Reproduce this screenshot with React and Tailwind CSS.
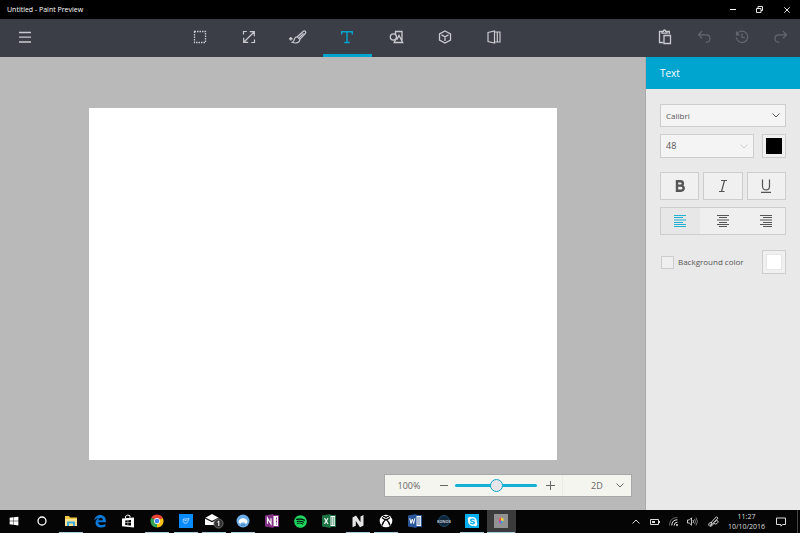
import React, { useState } from 'react';
import { FaSkype, FaSpotify, FaWindows } from 'react-icons/fa';

const line = { fill: 'none', stroke: 'currentColor', strokeWidth: 1 };

function SelectIcon() {
  return (
    <svg viewBox="0 0 14 14" className="w-3.5 h-3.5" {...line}>
      <rect x="1.5" y="1.5" width="11" height="11" strokeDasharray="1.5 1" strokeWidth="1.3" />
    </svg>
  );
}

function CropIcon() {
  return (
    <svg viewBox="0 0 14 14" className="w-3.5 h-3.5" {...line} strokeWidth="1.2">
      <path d="M1.500 4.500v-3H4.800M9.200 12.500h3.300V9.500M2 12 12 2M7.800 1.700h4.500v4.500M1.700 7.800v4.500h4.500" />
    </svg>
  );
}

function BrushIcon() {
  return (
    <svg viewBox="0 0 18 14" className="w-[18px] h-3.5" {...line} strokeWidth="1.2">
      <path d="M8.300 6.800 14.300 1.300q1.300-.8 2.100.1t-.1 2.100L10.800 9.400M10 7.800l4.500-4.500" />
      <path d="M8.300 6.800Q6.300 6.700 5.600 8.600C5.200 10.500 5 11.300 3.200 12.300c2.700 1 5.300.8 6.700-.5 1-1 .9-1.700.9-2.400Z" />
      <path d="M1.800 7v3.600M0 8.800h3.600" strokeWidth="1.4" />
    </svg>
  );
}

function TextIcon() {
  return (
    <svg viewBox="0 0 14 14" className="w-3.5 h-3.5" {...line} strokeWidth="1.4">
      <path d="M1.700 4.400V1.700h10.600v2.700M7 1.700v10.800M4.300 12.500h5.400" />
    </svg>
  );
}

function ShapesIcon() {
  return (
    <svg viewBox="0 0 15 14" className="w-[15px] h-3.5" {...line} strokeWidth="1.3">
      <path d="M6.500 4V1.500H13v9M6.800 9 5.200 12.500h8.500L10 5.500 7.800 9.600" />
      <circle cx="4.400" cy="7" r="3.100" />
    </svg>
  );
}

function CubeIcon() {
  return (
    <svg viewBox="0 0 14 14" className="w-3.5 h-3.5" {...line} strokeWidth="1.3">
      <path d="M7 1l5.500 2.800v6.400L7 13l-5.500-2.800V3.800ZM3.500 4.900 7 6.800l3.500-1.900M7 6.800V11" />
    </svg>
  );
}

function PanelsIcon() {
  return (
    <svg viewBox="0 0 14 14" className="w-3.5 h-3.5" {...line} strokeWidth="1.2">
      <path d="M1 2.500 7.500 1v12L1 11.500ZM7.500 2h2.800v10H7.500M10.300 2H13v10h-2.700" />
    </svg>
  );
}

function PasteIcon() {
  return (
    <svg viewBox="0 0 14 16" className="w-3.5 h-4" {...line} strokeWidth="1.3">
      <path d="M5.500 13.500h-4v-11H4M8.800 2.500h2.500V5M4 4.200V2.400h1.400C5.500.5 7.500.5 7.600 2.400H9v1.800Z" />
      <path d="M6 6.500h6.500v8H6Z" />
    </svg>
  );
}

function UndoIcon({ flip }) {
  return (
    <svg viewBox="0 0 14 14" className={flip ? 'w-3.5 h-3.5 -scale-x-100' : 'w-3.5 h-3.5'} {...line} strokeWidth="1.200">
      <path d="M5 1.200 1.500 4.800 5 8.400M1.500 4.800H9c2.500 0 4 1.600 4 3.700s-1.600 3.800-4.200 3.800" />
    </svg>
  );
}

function HistoryIcon() {
  return (
    <svg viewBox="0 0 14 14" className="w-3.5 h-3.5" {...line} strokeWidth="1.200">
      <path d="M1.500 1.500v3.300h3.300M1.700 4.600A5.700 5.700 0 1 1 1.300 7.500M7 3.500v4h3" />
    </svg>
  );
}

function Chevron({ className }) {
  return (
    <svg viewBox="0 0 8 5" className={`w-2 h-[5px] pointer-events-none ${className}`} {...line}>
      <path d="M.5.5 4 4 7.500.5" />
    </svg>
  );
}

const tools = [
  { name: 'Select', Icon: SelectIcon },
  { name: 'Crop', Icon: CropIcon },
  { name: 'Brushes', Icon: BrushIcon },
  { name: 'Text', Icon: TextIcon },
  { name: 'Stickers', Icon: ShapesIcon },
  { name: '3D objects', Icon: CubeIcon },
  { name: 'Canvas', Icon: PanelsIcon },
];

function TitleBar() {
  return (
    <header className="flex items-center justify-between h-[19px] shrink-0 bg-black text-white pl-[7px]">
      <h1 className="text-[7px] leading-none">Untitled - Paint Preview</h1>
      <div className="flex">
        <button aria-label="Minimize" className="w-[27px] h-[19px] flex items-center justify-center">
          <svg viewBox="0 0 6 6" className="w-1.5 h-1.5" {...line}><path d="M0 2.500h6" /></svg>
        </button>
        <button aria-label="Restore" className="w-[27px] h-[19px] flex items-center justify-center">
          <svg viewBox="0 0 7 7" className="w-[7px] h-[7px]" {...line} strokeWidth=".9">
            <path d="M.5 2.500H5v4H.5ZM2 2.500v-2h4.500v4H5" />
          </svg>
        </button>
        <button aria-label="Close" className="w-[27px] h-[19px] flex items-center justify-center">
          <svg viewBox="0 0 6 6" className="w-1.5 h-1.5" {...line} strokeWidth=".9"><path d="m.3.300 5.400 5.400M5.700.3.300 5.700" /></svg>
        </button>
      </div>
    </header>
  );
}

function Toolbar({ tool, setTool }) {
  return (
    <div className="flex h-[38px] shrink-0 bg-[#3b3e47] text-[#c9cad0]">
      <button aria-label="Menu" className="w-[49px] pb-[3px] flex items-center justify-center">
        <svg viewBox="0 0 12 12" className="w-3 h-3" {...line} strokeWidth="1.3"><path d="M0 1.500h12M0 6.200h12M0 11h12" /></svg>
      </button>
      <nav className="flex ml-[127px] flex-1">
        {tools.map(({ name, Icon }) => (
          <button
            key={name}
            aria-label={name}
            onClick={() => setTool(name)}
            className={
              tool === name
                ? 'w-[49px] pr-px flex items-center justify-center border-b-3 border-[#00a5cf] text-[#00a5cf]'
                : 'w-[49px] pr-px flex items-center justify-center border-b-3 border-transparent'
            }
          >
            <Icon />
          </button>
        ))}
      </nav>
      <div className="grid grid-cols-4 w-[154px] pb-[3px]">
        <button aria-label="Paste" className="flex items-center justify-center"><PasteIcon /></button>
        <button aria-label="Undo" className="flex items-center justify-center text-[#656871]"><UndoIcon /></button>
        <button aria-label="History" className="flex items-center justify-center text-[#656871]"><HistoryIcon /></button>
        <button aria-label="Redo" className="flex items-center justify-center text-[#656871]"><UndoIcon flip /></button>
      </div>
    </div>
  );
}

function ZoomBar() {
  const [zoom, setZoom] = useState(50);
  return (
    <div className="flex items-center self-end h-[21px] w-[246px] mt-[15px] mr-3.5 bg-[#f4f5ee] text-[#666] outline outline-[#a8a8a8] text-[9px]">
      <span className="w-[48px] text-center">100%</span>
      <button aria-label="Zoom out" className="w-[21px] h-full flex items-center justify-center">
        <svg viewBox="0 0 8 8" className="w-2 h-2" {...line}><path d="M0 3.500h8" /></svg>
      </button>
      <input
        type="range"
        aria-label="Zoom"
        value={zoom}
        onChange={(e) => setZoom(e.target.value)}
        className="w-[82px] mx-px h-3.5 appearance-none bg-transparent [&::-webkit-slider-runnable-track]:h-[3px] [&::-webkit-slider-runnable-track]:rounded-full [&::-webkit-slider-runnable-track]:bg-[#16b0d5] [&::-webkit-slider-thumb]:appearance-none [&::-webkit-slider-thumb]:w-[13px] [&::-webkit-slider-thumb]:h-[13px] [&::-webkit-slider-thumb]:-mt-[5px] [&::-webkit-slider-thumb]:rounded-full [&::-webkit-slider-thumb]:bg-[#e6e6ea] [&::-webkit-slider-thumb]:border [&::-webkit-slider-thumb]:border-[#0fa5cb]"
      />
      <button aria-label="Zoom in" className="w-[24px] h-full flex items-center justify-center">
        <svg viewBox="0 0 9 9" className="w-[9px] h-[9px]" {...line}><path d="M0 4.500h9M4.500 0v9" /></svg>
      </button>
      <div className="relative flex-1 h-full flex items-center border-l border-[#ecece6]">
        <select aria-label="View" className="appearance-none w-full h-full pl-[28px]">
          <option>2D</option>
          <option>3D</option>
        </select>
        <Chevron className="absolute right-[7px]" />
      </div>
    </div>
  );
}

function AlignIcon({ d }) {
  return <svg viewBox="0 0 12 12" className="w-3 h-3" {...line}><path d={d} /></svg>;
}

const aligns = [
  { name: 'Align left', d: 'M0 .5h12M0 2.500h9M0 5h12M0 7.500h9M0 9.500h12M0 11.500h12' },
  { name: 'Align center', d: 'M0 .5h12M2 2.500h8M0 5h12M2 7.500h8M0 9.500h12M2 11.500h8' },
  { name: 'Align right', d: 'M0 .5h12M3 2.500h9M0 5h12M3 7.500h9M0 9.500h12M3 11.500h9' },
];

function TextPanel() {
  const [align, setAlign] = useState('Align left');
  return (
    <aside className="w-[154px] shrink-0 bg-[#e9e9e9] text-[#555]">
      <h2 className="h-8 px-3.5 flex items-center bg-[#00a5cf] text-white text-[10px]">Text</h2>
      <div className="px-3.5 pt-[15px] text-[8px]">
        <div className="relative flex items-center">
          <select aria-label="Font" className="appearance-none w-full h-[23px] pl-[5px] bg-[#f4f4f4] border border-[#cdcdcd]">
            <option>Calibri</option>
            <option>Arial</option>
          </select>
          <Chevron className="absolute right-1.5" />
        </div>
        <div className="flex gap-2 mt-[7px]">
          <div className="relative flex items-center flex-1">
            <select aria-label="Font size" className="appearance-none w-full h-6 pl-[5px] bg-[#f4f4f4] border border-[#cdcdcd] text-[9px]">
              <option>48</option>
              <option>72</option>
            </select>
            <Chevron className="absolute right-1.5 text-[#ccc]" />
          </div>
          <button aria-label="Text color" className="w-6 h-6 p-[3px] bg-[#f0f0f0] border border-[#cdcdcd]">
            <span className="block w-full h-full bg-black" />
          </button>
        </div>
        <div className="grid grid-cols-3 gap-1 mt-3.5">
          <button aria-label="Bold" className="h-7 flex items-center justify-center bg-[#f0f0f0] border border-[#cdcdcd]">
            <svg viewBox="0 0 12 14" className="w-3 h-3.5" {...line} strokeWidth="2.400">
              <path d="M3 2.200h3.200c3.600 0 3.600 4.400 0 4.400H3M6.200 6.600c4.700 0 4.700 5.200 0 5.200H3V1" />
            </svg>
          </button>
          <button aria-label="Italic" className="h-7 flex items-center justify-center bg-[#f0f0f0] border border-[#cdcdcd]">
            <svg viewBox="0 0 12 14" className="w-3 h-3.5" {...line} strokeWidth="1.2"><path d="M4 1.500h6M2 12.500h5.500M7.500 1.500 4.500 12.500" /></svg>
          </button>
          <button aria-label="Underline" className="h-7 flex items-center justify-center bg-[#f0f0f0] border border-[#cdcdcd]">
            <svg viewBox="0 0 12 14" className="w-3 h-3.5" {...line} strokeWidth="1.2"><path d="M2.500.5v6.700c0 5 7 5 7 0V.5M1 13.400h10" /></svg>
          </button>
        </div>
        <div className="grid grid-cols-3 gap-1 mt-[7px] h-7 border border-[#cdcdcd] bg-[#efefef]">
          {aligns.map(({ name, d }) => (
            <button
              key={name}
              aria-label={name}
              onClick={() => setAlign(name)}
              className={align === name ? 'flex items-center justify-center bg-[#e7e7e7] text-[#1fb0d4]' : 'flex items-center justify-center'}
            >
              <AlignIcon d={d} />
            </button>
          ))}
        </div>
        <div className="flex items-center justify-between mt-[15px]">
          <label className="flex items-center gap-1 pl-px">
            <input type="checkbox" className="appearance-none w-[13px] h-[13px] bg-[#efefef] border border-[#cdcdcd] checked:bg-[#00a5cf]" />
            Background color
          </label>
          <button aria-label="Background color swatch" className="w-6 h-6 p-[3px] bg-[#f0f0f0] border border-[#cdcdcd]">
            <span className="block w-full h-full bg-white border border-[#e6e6e6]" />
          </button>
        </div>
      </div>
    </aside>
  );
}

function Tile({ children }) {
  return <svg viewBox="0 0 14 14" className="w-3.5 h-3.5">{children}</svg>;
}

const apps = [
  { name: 'Start', icon: <FaWindows className="w-2.5 h-2.5" /> },
  { name: 'Cortana', icon: <Tile><circle cx="7" cy="7" r="4" fill="none" stroke="#fff" strokeWidth="1.300" /></Tile> },
  {
    name: 'File Explorer',
    open: true,
    icon: (
      <Tile>
        <path d="M1 2h4l1 1.500h7V12H1Z" fill="#f5c746" />
        <path d="M1 5h12v7H1Z" fill="#fde38e" />
        <path d="M3 7.500h8V12H9V9.500H5V12H3Z" fill="#3fa9e0" />
      </Tile>
    ),
  },
  {
    name: 'Edge',
    icon: (
      <Tile>
        <path
          d="M1.200 6.300C1.700 3 4.200 1 7.200 1c3.600 0 5.700 2.600 5.700 5.800v1.400H5.200c.1 2 1.700 2.800 3.700 2.800 1.300 0 2.500-.4 3.500-1v2.500c-1.200.7-2.600 1-4.200 1C4.700 13.500 2.500 11.400 2.500 8.700c0-2.200 1.200-3.900 3.100-4.800C3.600 4 2 5 1.200 6.300ZM5.300 6.300h4.600c0-1.500-.8-2.300-2.200-2.300-1.300 0-2.200.9-2.400 2.300Z"
          fill="#0a78d7"
          fillRule="evenodd"
        />
      </Tile>
    ),
  },
  {
    name: 'Store',
    icon: (
      <Tile>
        <path d="M1 4.500 13 3.500V13.500L1 12.300Z" fill="#fff" />
        <path d="M4.500 4.200V2.300Q6.800 0 9 1.800v2" fill="none" stroke="#fff" />
        <path d="M4.200 6.500l2.500-.2v2.200H4.200ZM7.200 6.200 10 6v2.500H7.200ZM4.200 9h2.500v2.300l-2.500-.2ZM7.200 9H10v2.600l-2.800-.2Z" fill="#000" />
      </Tile>
    ),
  },
  {
    name: 'Chrome',
    open: true,
    icon: (
      <Tile>
        <path d="M7 7 1.400 3.700A6.500 6.500 0 0 1 12.600 3.700Z" fill="#e54335" />
        <path d="M7 7 12.600 3.700A6.500 6.500 0 0 1 7 13.500Z" fill="#fbc116" />
        <path d="M7 7v6.500A6.500 6.500 0 0 1 1.400 3.700Z" fill="#34a353" />
        <path d="M7 4h5.800L7 7Z" fill="#e54335" />
        <circle cx="7" cy="7" r="3" fill="#fff" />
        <circle cx="7" cy="7" r="2.300" fill="#4285f4" />
      </Tile>
    ),
  },
  {
    name: 'Bird',
    open: true,
    icon: (
      <Tile>
        <path d="M0 0h14v14H0Z" fill="#0a8cff" />
        <path d="M4.500 5h3.800l1.700-.7-.8 1.500C9 8.500 7.500 9.500 6 9.200 4.300 8.900 3.800 7 4.500 5ZM5.500 6.500h2" fill="none" stroke="#b5dbff" strokeWidth=".9" />
      </Tile>
    ),
  },
  {
    name: 'Mail',
    open: true,
    icon: (
      <svg viewBox="0 0 20 16" className="w-5 h-4">
        <path d="M1 5 8 1l7 4v7H1Z" fill="#fff" />
        <path d="m1 5 7 3.500L15 5" fill="none" stroke="#111" strokeWidth="1.200" />
        <circle cx="14.500" cy="10.500" r="4.600" fill="#333" stroke="#777" strokeWidth=".8" />
        <path d="M13.300 9.200 14.800 8v5" fill="none" stroke="#fff" />
      </svg>
    ),
  },
  {
    name: 'Tweeten',
    open: true,
    icon: (
      <Tile>
        <circle cx="7" cy="7" r="6.500" fill="#6eaee6" />
        <path d="M2.500 8C3 3 11 3 11.500 8L10 10 8.500 8.500h-3L4 10Z" fill="#fff" />
        <path d="M5 11.500q2-1.500 4 0" fill="none" stroke="#3578b5" />
      </Tile>
    ),
  },
  {
    name: 'OneNote',
    icon: (
      <Tile>
        <path d="M7 1.500h6.500v11H7Z" fill="#fff" stroke="#813083" />
        <path d="M11.500 3.500v7" stroke="#813083" strokeDasharray="2 1" />
        <path d="M0 1.500 8.500 0v14L0 12.500Z" fill="#813083" />
        <path d="M2.500 9.800V4.200l3.500 5.600V4.200" fill="none" stroke="#fff" strokeWidth="1.200" />
      </Tile>
    ),
  },
  { name: 'Spotify', icon: <FaSpotify className="w-[13px] h-[13px] text-[#1ed45e]" /> },
  {
    name: 'Excel',
    icon: (
      <Tile>
        <path d="M7 1.500h6.500v11H7Z" fill="#fff" stroke="#1f7446" />
        <path d="M9 4h3.500M9 6h3.500M9 8h3.500M9 10h3.500" stroke="#1f7446" strokeDasharray="1.500 .5" />
        <path d="M0 1.500 8.500 0v14L0 12.500Z" fill="#1f7446" />
        <path d="m2.500 4.200 3.500 5.600M6 4.200 2.500 9.800" stroke="#fff" strokeWidth="1.200" />
      </Tile>
    ),
  },
  {
    name: 'Nextgen Reader',
    open: true,
    icon: <Tile><path d="M1.500 3.500 5 1.500l4.500 6.700V2.500L12.500 1v10.500L9 13.300 4.800 7v4.800L1.500 13.300Z" fill="#e4e4e4" /></Tile>,
  },
  {
    name: 'Xbox',
    open: true,
    icon: (
      <Tile>
        <circle cx="7" cy="7" r="6.300" fill="#fff" />
        <path d="M4 2.200Q5.500 2.300 7 3.500 8.500 2.300 10 2.200M3 11.500Q4 7.500 7 5.200 10 7.500 11 11.500M3 3.500 6 5.700M11 3.500 8 5.700" fill="none" stroke="#000" strokeWidth="1.300" />
      </Tile>
    ),
  },
  {
    name: 'Word',
    icon: (
      <Tile>
        <path d="M7 1.500h6.500v11H7Z" fill="#fff" stroke="#2b569a" />
        <path d="M9 4h3.500M9 6h3.500M9 8h3.500M9 10h3.500" stroke="#2b569a" strokeWidth=".8" />
        <path d="M0 1.500 8.500 0v14L0 12.500Z" fill="#2b569a" />
        <path d="m1.800 4.300 1.200 5.200 1.300-4.500 1.300 4.500 1.200-5.200" fill="none" stroke="#fff" />
      </Tile>
    ),
  },
  {
    name: 'Sonos',
    icon: (
      <Tile>
        <circle cx="7" cy="7" r="5.500" fill="#102538" stroke="#1d4869" />
        <text x="7" y="8.500" fontSize="4" fontWeight="bold" textAnchor="middle" fill="#c5ced6">SONOS</text>
      </Tile>
    ),
  },
  {
    name: 'Skype',
    open: true,
    icon: <span className="w-3.5 h-3.5 flex items-center justify-center bg-[#00aff0]"><FaSkype className="w-[11px] h-[11px]" /></span>,
  },
  {
    name: 'Paint Preview',
    open: true,
    active: true,
    icon: (
      <Tile>
        <path d="M0 0h14v14H0Z" fill="#929292" />
        <path d="M5 4.200 7 3.500v3L5 7Z" fill="#ef4f46" />
        <path d="m7 3.500 2.500 1v3L7 6.500Z" fill="#f7d33c" />
        <path d="m5 7 2-.5V10L5 8.800Z" fill="#a551c4" />
        <path d="m7 6.500 2.500 1L7 10Z" fill="#38a9c8" />
      </Tile>
    ),
  },
];

function Taskbar() {
  return (
    <footer className="flex justify-between h-[23px] shrink-0 bg-[#050505] text-white">
      <div className="grid grid-cols-18 w-[516px]">
        {apps.map(({ name, icon, open, active }) => (
          <button
            key={name}
            aria-label={name}
            className={`flex flex-col items-center pr-px ${active ? 'bg-[#3b3b3b]' : ''}`}
          >
            <span className="flex flex-1 items-center justify-center">{icon}</span>
            <span className={`h-px ${active ? 'w-full' : 'w-6'} ${open ? 'bg-[#a9cfe2]' : 'bg-transparent'}`} />
          </button>
        ))}
      </div>
      <div className="flex items-center text-[#ddd]">
        <button aria-label="Show hidden icons" className="w-[19px] flex justify-center"><Chevron className="rotate-180" /></button>
        <button aria-label="Battery" className="w-[19px] flex justify-center">
          <svg viewBox="0 0 10 8" className="w-2.5 h-2" {...line}><path d="M.5 1.500h8v5h-8ZM9.500 3v2" /><path d="M2 3h3v2H2Z" fill="currentColor" stroke="none" /></svg>
        </button>
        <button aria-label="Network" className="w-[19px] flex justify-center">
          <svg viewBox="0 0 9 9" className="w-[9px] h-[9px]" {...line}>
            <path d="M.5 8.500Q.5.500 8.500.5" stroke="#666" />
            <path d="M2.800 8.500q0-5.700 5.700-5.700M5.200 8.500q0-3.300 3.300-3.300" />
            <circle cx="8" cy="8" r="1" fill="currentColor" stroke="none" />
          </svg>
        </button>
        <button aria-label="Volume" className="w-[19px] flex justify-center">
          <svg viewBox="0 0 11 9" className="w-[11px] h-[9px]" {...line} strokeWidth=".9">
            <path d="M.5 3h1.800L4.500.8v7.400L2.300 6H.5ZM6 3q1 1.500 0 3" />
            <path d="M7.500 1.800q2 2.700 0 5.400M9 .5q2.800 4 0 8" stroke="#888" />
          </svg>
        </button>
        <button aria-label="Windows Ink" className="w-[22px] flex justify-center">
          <svg viewBox="0 0 11 11" className="w-[11px] h-[11px]" {...line}>
            <path d="M2.500 9.500 4 5.500 8.500.8l1.500 1.400L5.500 7ZM3.500 6.500C1 6 0 9 1.500 10S5 9 5.500 7.500M6 6.500C8 3.500 11 4.500 9.800 6.500S6.500 8.500 6 7" />
          </svg>
        </button>
        <time className="w-[45px] text-center text-[7px] leading-[10px]">
          11:27<br />10/10/2016
        </time>
        <button aria-label="Notifications" className="w-[23px] flex justify-center">
          <svg viewBox="0 0 10 10" className="w-2.5 h-2.5" {...line}><path d="M.5 1h9v6.500H6.500L5 9.200V7.500H.5Z" /></svg>
        </button>
        <span className="ml-[5px] w-[3px] h-full border-l border-[#444]" />
      </div>
    </footer>
  );
}

function App() {
  const [tool, setTool] = useState('Text');
  return (
    <div className="flex flex-col h-screen font-['Open_Sans','Noto_Sans',sans-serif]">
      <TitleBar />
      <Toolbar tool={tool} setTool={setTool} />
      <main className="flex flex-1 min-h-0">
        <section className="flex flex-col flex-1 bg-[#b9b9b9] pt-[51px] pb-3.5 border-r border-[#aaa]">
          <div className="flex-1 ml-[89px] mr-[88px] bg-white" />
          <ZoomBar />
        </section>
        <TextPanel />
      </main>
      <Taskbar />
    </div>
  );
}

export default App;
